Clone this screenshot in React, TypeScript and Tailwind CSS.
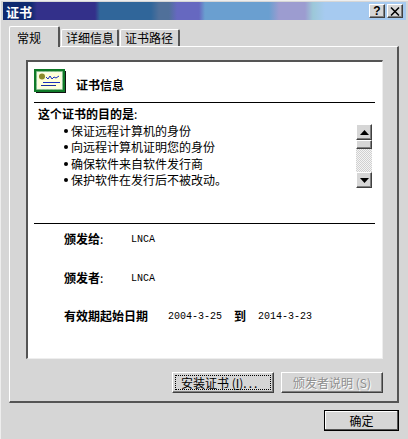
import React from "react";

const cjk = "font-['SimSun','Noto_Sans_CJK_SC',sans-serif]";
const raised =
  "border border-t-white border-l-white border-r-[#404040] border-b-[#404040] shadow-[inset_-1px_-1px_0_#808080]";

function Tab({ label, active, w }: { label: string; active?: boolean; w: string }) {
  return (
    <div
      className={`${w} ${
        active ? "h-[21px] -mb-px z-10 bg-[#d6d6d6] pl-[7px] pt-[1px]" : "h-[17px] pl-[4px]"
      } flex items-center text-[12px] text-black border-t border-l border-t-white border-l-white border-r-2 border-r-[#555] rounded-t-[2px]`}
    >
      {label}
    </div>
  );
}

function CertIcon() {
  return (
    <svg width="32" height="24" viewBox="0 0 32 24" className="shrink-0 mb-[8px]">
      <rect x="2" y="2" width="30" height="22" fill="#111" />
      <rect x="0" y="0" width="31" height="23" fill="#0f7a28" />
      <rect x="2.5" y="2.5" width="26" height="18" fill="#f4fbe8" stroke="#8fbf8f" strokeDasharray="2 2" />
      <rect x="4" y="4" width="23" height="15" fill="#ffffd8" />
      <circle cx="8" cy="7.5" r="3" fill="#8a8a2a" />
      <path d="M12 8 l2 2 l2 -3 l2 3 l2 -2 l2 1 l3 -2" stroke="#1a2fc0" strokeWidth="1" fill="none" />
      <path d="M9 13.5 h17" stroke="#1a2fc0" strokeWidth="1" />
      <path d="M7 16.5 h15" stroke="#1a2fa0" strokeWidth="1" />
    </svg>
  );
}

function Arrow({ up }: { up?: boolean }) {
  return (
    <svg width="9" height="5" viewBox="0 0 9 5">
      <path d={up ? "M4.5 0 L9 5 H0 Z" : "M0 0 H9 L4.5 5 Z"} fill="#000" />
    </svg>
  );
}

export default function App() {
  return (
    <div
      className={`w-[408px] h-[439px] bg-[#d6d6d6] flex flex-col p-[2px] border-t border-l border-t-[#eee] border-l-[#eee] overflow-hidden ${cjk}`}
    >
      <div className="h-[18px] -mt-px shrink-0 flex items-center justify-between pl-[3px] pr-[3px] bg-[linear-gradient(90deg,#0f2a70_0px,#0f2a70_28px,#33308a_34px,#33308a_92px,#30669a_97px,#30669a_148px,#50709a_156px,#50709a_166px,#6668c0_174px,#6668c0_196px,#6a9fd0_202px,#6a9fd0_266px,#9c9cd0_276px,#9c9cd0_302px,#9cc8d8_310px,#a6caf0_322px,#a6caf0_100%)]">
        <span className="text-[13px] font-bold text-white leading-none">证书</span>
        <div className="flex gap-[2px]">
          <div className={`w-[16px] h-[14px] bg-[#d6d6d6] ${raised} flex items-center justify-center text-[12px] font-bold leading-none font-['Liberation_Sans',sans-serif]`}>?</div>
          <div className={`w-[16px] h-[14px] bg-[#d6d6d6] ${raised} flex items-center justify-center`}>
            <svg width="10" height="9" viewBox="0 0 10 9">
              <path d="M1 0.5 L9 8.5 M9 0.5 L1 8.5" stroke="#000" strokeWidth="1.5" />
            </svg>
          </div>
        </div>
      </div>

      <div className="flex items-end ml-[6px] mt-[7px] h-[19px] shrink-0 gap-[1px]">
        <Tab label="常规" active w="w-[51px]" />
        <Tab label="详细信息" w="w-[58px]" />
        <Tab label="证书路径" w="w-[60px]" />
      </div>

      <div className="ml-[6px] mr-[7px] h-[357px] shrink-0 border-t border-l border-t-white border-l-white border-r-2 border-b-2 border-r-[#555] border-b-[#555] pt-[13px] pl-[16px] pr-[14px]">
        <div className="h-[299px] bg-white border-t-2 border-l-2 border-t-[#555] border-l-[#555] border-r border-b border-r-[#eee] border-b-[#eee] px-[6px]">
          <div className="flex items-center h-[41px] pt-[5px] gap-[10px] border-b border-b-black mx-[0px] w-[341px]">
            <CertIcon />
            <span className="text-[12px] font-bold text-black">证书信息</span>
          </div>
          <div className="h-[121px] w-[341px] border-b border-b-black pl-[4px] pt-[2px] relative">
            <div className="text-[12px] leading-[17px] font-bold text-black">
              这个证书的目的是<span className="font-normal">:</span>
            </div>
            <ul className="mt-[1px] pl-[26px] text-[12px] leading-[16.3px] text-black">
              {["保证远程计算机的身份", "向远程计算机证明您的身份", "确保软件来自软件发行商", "保护软件在发行后不被改动。"].map((t) => (
                <li key={t} className="flex items-center gap-[3px]">
                  <span className="w-[4px] h-[4px] rounded-full bg-black shrink-0" />
                  {t}
                </li>
              ))}
            </ul>
            <div className="absolute left-[322px] top-[21px] w-[16px] h-[64px] flex flex-col bg-[#e8e8e8]">
              <div className={`h-[16px] bg-[#d6d6d6] ${raised} flex items-center justify-center`}><Arrow up /></div>
              <div className={`h-[9px] bg-[#d6d6d6] ${raised}`} />
              <div className="flex-1 bg-[repeating-conic-gradient(#d0d0d0_0_25%,#f4f4f4_0_50%)] bg-[length:2px_2px]" />
              <div className={`h-[16px] bg-[#d6d6d6] ${raised} flex items-center justify-center`}><Arrow /></div>
            </div>
          </div>
          <div className="pl-[30px] pt-[7px] text-[12px] text-black">
            <div className="flex items-center h-[16px]">
              <span className="w-[67px] font-bold">颁发给<span className="font-normal">:</span></span>
              <span className="text-[10px] font-['Liberation_Mono',monospace]">LNCA</span>
            </div>
            <div className="flex items-center h-[16px] mt-[23px]">
              <span className="w-[67px] font-bold">颁发者<span className="font-normal">:</span></span>
              <span className="text-[10px] font-['Liberation_Mono',monospace]">LNCA</span>
            </div>
            <div className="flex items-center h-[16px] mt-[22px]">
              <span className="w-[104px] font-bold">有效期起始日期</span>
              <span className="w-[66px] text-[10px] font-['Liberation_Mono',monospace]">2004-3-25</span>
              <span className="w-[24px] font-bold">到</span>
              <span className="text-[10px] font-['Liberation_Mono',monospace]">2014-3-23</span>
            </div>
          </div>
        </div>
        <div className="flex justify-end gap-[7px] mt-[13px] w-[357px]">
          <div className={`w-[102px] h-[21px] bg-[#d6d6d6] ${raised} flex items-center justify-center p-[2px] text-[12px] text-black`}>
            <div className="w-full h-full border border-dotted border-black flex items-center justify-start pl-[5px]">
              安装证书 (<span className="underline">I</span>)<span className="tracking-[2px]">...</span>
            </div>
          </div>
          <div className={`w-[102px] h-[21px] bg-[#d6d6d6] ${raised} flex items-center justify-center text-[12px] text-[#8f8f8f] [text-shadow:1px_1px_0_#fff]`}>
            颁发者说明 (S)
          </div>
        </div>
      </div>

      <div className="flex justify-end mt-[7px] mr-[7px]">
        <div className="w-[75px] h-[21px] border border-black shadow-[inset_-1px_-1px_0_#555,inset_1px_1px_0_#fff] bg-[#d6d6d6] flex items-center justify-center text-[12px] text-black">
          确定
        </div>
      </div>
    </div>
  );
}
